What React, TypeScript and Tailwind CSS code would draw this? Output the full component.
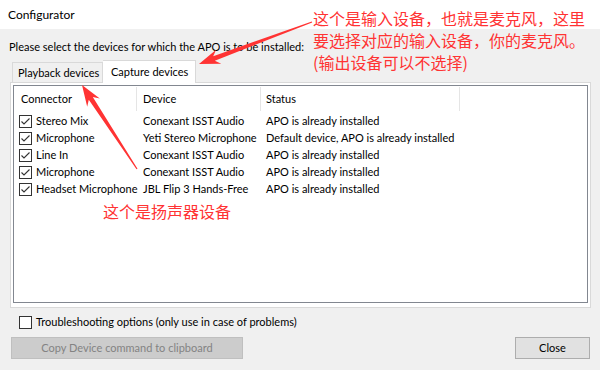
import React from "react";

const rows = [
  ["Stereo Mix", "Conexant ISST Audio", "APO is already installed"],
  ["Microphone", "Yeti Stereo Microphone", "Default device, APO is already installed"],
  ["Line In", "Conexant ISST Audio", "APO is already installed"],
  ["Microphone", "Conexant ISST Audio", "APO is already installed"],
  ["Headset Microphone", "JBL Flip 3 Hands-Free", "APO is already installed"],
];

function Check({ checked }: { checked: boolean }) {
  return (
    <svg width="13" height="13" viewBox="0 0 13 13" className="shrink-0">
      <rect x="0.5" y="0.5" width="12" height="12" fill="#fff" stroke="#333" />
      {checked && (
        <path d="M2.5 6.5 L5 9 L10.5 3.5" fill="none" stroke="#333" strokeWidth="1.1" />
      )}
    </svg>
  );
}

function arrowPts(x1: number, y1: number, x2: number, y2: number) {
  const dx = x2 - x1;
  const dy = y2 - y1;
  const L = Math.hypot(dx, dy);
  const ux = dx / L;
  const uy = dy / L;
  const nx = -uy;
  const ny = ux;
  const hl = 21;
  const hw = 7.5;
  const sw = 2.4;
  const tw = 0.6;
  const bx = x2 - ux * hl;
  const by = y2 - uy * hl;
  const jx = x2 - ux * (hl - 5);
  const jy = y2 - uy * (hl - 5);
  const p = [
    [x1 + nx * tw, y1 + ny * tw],
    [jx + nx * sw, jy + ny * sw],
    [bx + nx * hw, by + ny * hw],
    [x2, y2],
    [bx - nx * hw, by - ny * hw],
    [jx - nx * sw, jy - ny * sw],
    [x1 - nx * tw, y1 - ny * tw],
  ];
  return p.map((q) => q[0].toFixed(1) + "," + q[1].toFixed(1)).join(" ");
}

export default function App() {
  return (
    <div
      className="relative w-[600px] h-[370px] overflow-hidden bg-[#f0f0f0] text-[11px] text-black"
      style={{ fontFamily: 'Lato, "Noto Sans", sans-serif' }}
    >
      <div className="h-[29px] bg-white flex items-center pl-[8px] text-[12px]">Configurator</div>

      <div className="pt-[10px] pl-[9px] leading-[16px] whitespace-nowrap">
        Please select the devices for which the APO is to be installed:
      </div>

      <div className="mt-[5px] ml-[12px] flex items-start relative z-10 whitespace-nowrap">
        <div className="mt-[2px] h-[20px] w-[91px] border border-b-0 border-[#d9d9d9] bg-[#f0f0f0] flex items-center pl-[5px] leading-none">
          Playback devices
        </div>
        <div className="h-[23px] w-[93px] border border-b-0 border-l-0 border-[#d9d9d9] bg-white flex items-center pl-[8px] pb-[2px] leading-none">
          Capture devices
        </div>
      </div>

      <div className="-mt-px ml-[10px] w-[581px] h-[226px] border border-[#d9d9d9] bg-white pt-[2px] pl-[2px] pr-[2px] pb-[4px]">
        <div className="w-full h-full border border-[#828790] bg-white">
          <div className="flex h-[27px] items-start">
            <div className="w-[123px] h-[24px] mt-[1px] border-r border-[#e5e5e5] pl-[7px] flex items-center">Connector</div>
            <div className="w-[124px] h-[24px] mt-[1px] border-r border-[#e5e5e5] pl-[6px] flex items-center">Device</div>
            <div className="w-[199px] h-[24px] mt-[1px] border-r border-[#e5e5e5] pl-[5px] flex items-center">Status</div>
          </div>
          {rows.map((r, i) => (
            <div key={i} className="flex h-[17px] items-center">
              <div className="w-[123px] pl-[5px] flex items-center gap-[4px] whitespace-nowrap">
                <Check checked />
                <span>{r[0]}</span>
              </div>
              <div className="w-[124px] pl-[6px] whitespace-nowrap">{r[1]}</div>
              <div className="pl-[5px] whitespace-nowrap">{r[2]}</div>
            </div>
          ))}
        </div>
      </div>

      <div className="mt-[8px] ml-[19px] flex items-center gap-[4px] h-[13px] whitespace-nowrap">
        <Check checked={false} />
        <span>Troubleshooting options (only use in case of problems)</span>
      </div>

      <div className="mt-[8px] flex justify-between pl-[11px] pr-[10px]">
        <div className="w-[232px] h-[22px] bg-[#cccccc] border border-[#bfbfbf] text-[#838383] flex items-center justify-center whitespace-nowrap">
          Copy Device command to clipboard
        </div>
        <div className="w-[75px] h-[22px] bg-[#e1e1e1] border border-[#adadad] flex items-center justify-center">
          Close
        </div>
      </div>

      {/* annotations */}
      <div
        className="absolute left-[313px] top-[7px] text-[16px] leading-[22px] text-[#ff3333] whitespace-nowrap"
        style={{ fontFamily: '"Noto Sans CJK SC", sans-serif' }}
      >
        <div>这个是输入设备，也就是麦克风，这里</div>
        <div>要选择对应的输入设备，你的麦克风。</div>
        <div>(输出设备可以不选择)</div>
      </div>
      <div
        className="absolute left-[103px] top-[200px] text-[16px] leading-[22px] text-[#ff3333] whitespace-nowrap"
        style={{ fontFamily: '"Noto Sans CJK SC", sans-serif' }}
      >
        这个是扬声器设备
      </div>
      <svg className="absolute left-0 top-0 pointer-events-none" width="600" height="370">
        <polygon points={arrowPts(312, 22, 199, 64)} fill="#ff3333" />
        <polygon points={arrowPts(137, 169, 82, 85)} fill="#ff3333" />
      </svg>
    </div>
  );
}
